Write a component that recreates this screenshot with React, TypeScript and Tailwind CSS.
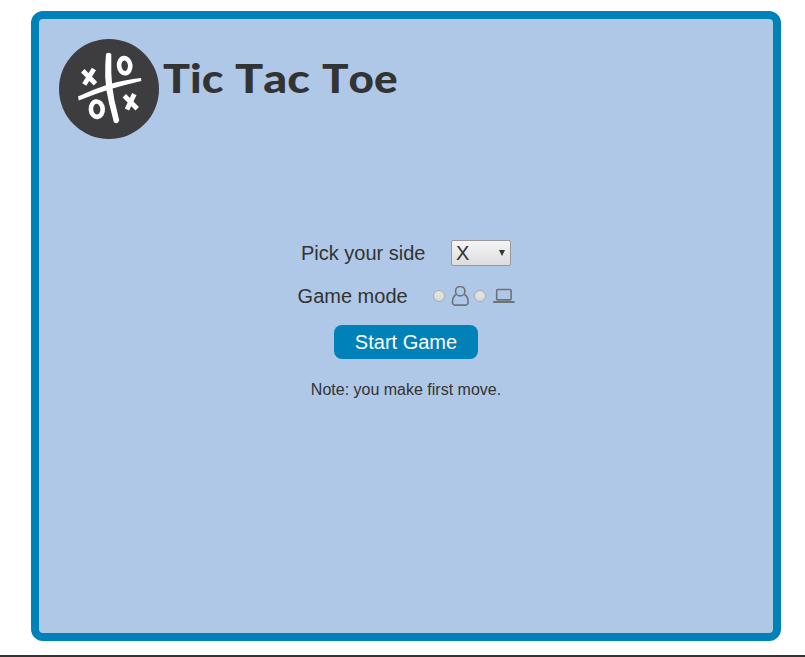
function Logo() {
  return (
    <svg viewBox="0 0 100 100" className="h-[100px] w-[100px] shrink-0" fill="none" aria-hidden="true">
      <circle cx="50" cy="50" r="50" fill="#3d3d3f" />
      <path d="M47 15Q49.5 12.4 52.3 15L52.3 34Q52.6 47 55.4 61L60.3 81.5Q58 86 54.8 83L50 64Q46.7 51 46.2 38Q46 25 47 15Z" fill="white" />
      <path d="M19 57.5Q34 50.5 49 45.6Q66 40.5 82 38.9L82.3 42Q65 46 51 50.2Q36 54.8 19.8 61.4Z" fill="white" />
      <ellipse cx="65.7" cy="26.7" rx="5.6" ry="7.6" transform="rotate(-6 65.7 26.7)" stroke="white" strokeWidth="4.6" />
      <ellipse cx="37.8" cy="70.2" rx="5.9" ry="7.7" transform="rotate(-5 37.8 70.2)" stroke="white" strokeWidth="4.6" />
      <path d="M25.5 33.5l9.3 9.5M33.7 32L26.5 43.5M67 58.5l9.5 9.5M74.3 57.3L69 68.3" stroke="white" strokeWidth="4.8" strokeLinecap="square" />
    </svg>
  );
}

function PersonIcon() {
  return (
    <svg viewBox="0 0 18 21" className="ml-1.5 h-[21px] w-[18px]" fill="none" stroke="#707278" strokeWidth="1.6">
      <circle cx="9.2" cy="5.2" r="4.7" />
      <path d="M5.2 8.2C2.8 9.7 1.6 12.4 1.5 15.7Q1.4 19.1 4.2 19.1H14.4Q17.2 19.1 17.1 15.7C17 12.4 15.8 9.7 13.3 8.2" />
    </svg>
  );
}

function LaptopIcon() {
  return (
    <svg viewBox="0 0 22 16" className="ml-[7px] h-4 w-[22px]" fill="none" stroke="#707278" strokeWidth="1.6">
      <rect x="3.7" y="1.5" width="14.4" height="10.4" rx="1" />
      <path d="M0.2 14H21.6" strokeWidth="2" />
    </svg>
  );
}

function Radio({ label }: { label: string }) {
  return (
    <input
      type="radio"
      name="mode"
      aria-label={label}
      className="h-3 w-3 appearance-none rounded-full border border-[#aaaaaa] bg-linear-to-b from-[#e5e5e5] to-[#dadada]"
    />
  );
}

export default function App() {
  return (
    <div className="flex h-[657px] w-full flex-col justify-between overflow-hidden bg-white pt-[11px] font-['Liberation_Sans',Arial,sans-serif] text-[#333333]">
      <main className="ml-[31px] h-[630px] w-[750px] rounded-xl border-8 border-[#0081b8] bg-[#afc8e7]">
        <header className="flex h-[120px] pt-5 pl-5">
          <Logo />
          <h1 className="ml-1 flex h-14 items-start pt-[15px] font-['Lato',sans-serif] text-[39px] leading-[48px] font-black whitespace-nowrap [font-kerning:none]">
            <span className="w-[72px]"><span className="inline-block origin-left scale-x-[1.15]">Tic</span></span>
            <span className="w-[87px]"><span className="inline-block origin-left scale-x-[1.2]">Tac</span></span>
            <span className="w-[80px]"><span className="inline-block origin-left scale-x-[1.13]">Toe</span></span>
          </h1>
        </header>
        <section className="flex flex-col items-center pt-[101px] text-xl">
          <div className="flex h-[26px] items-center">
            <label htmlFor="side" className="w-[150px]">Pick your side</label>
            <button id="side" className="flex h-[26px] w-[60px] items-center justify-between rounded-xs border border-[#999999] bg-linear-to-b from-[#f5f5f5] to-[#dddddd] pr-[5px] pl-1">
              <span>X</span>
              <svg viewBox="0 0 6 6" className="h-1.5 w-1.5"><path d="M0 0h6L3 6Z" fill="#333333" /></svg>
            </button>
          </div>
          <div className="mt-[17px] flex h-[26px] items-center">
            <span className="w-[136px] pl-[0.6px]">Game mode</span>
            <Radio label="Two players" />
            <PersonIcon />
            <span className="ml-[5px] flex"><Radio label="Computer" /></span>
            <LaptopIcon />
          </div>
          <button className="mt-4 h-[34px] w-36 rounded-lg bg-[#0081b8] text-white">Start Game</button>
          <p className="mt-[19px] text-base">Note: you make first move.</p>
        </section>
      </main>
      <div className="h-0.5 bg-[#333333]" />
    </div>
  );
}
